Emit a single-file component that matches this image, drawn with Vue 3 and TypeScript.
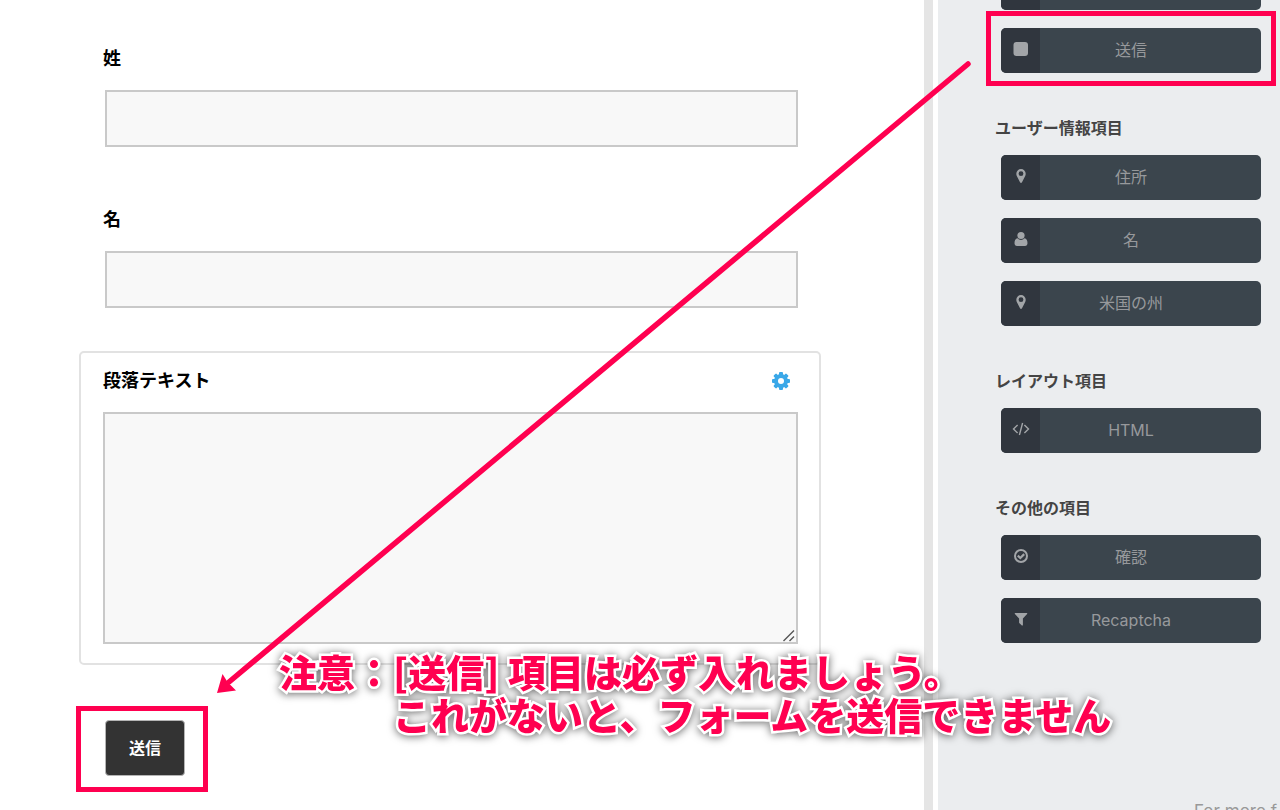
<script setup lang="ts">
type IconName = 'square' | 'marker' | 'user' | 'code' | 'check' | 'filter' | 'none'

interface FieldItem {
  label: string
  icon: IconName
  highlighted?: boolean
}

interface FieldGroup {
  title: string
  items: FieldItem[]
}

const groups: FieldGroup[] = [
  {
    title: '',
    items: [
      { label: '', icon: 'none' },
      { label: '送信', icon: 'square', highlighted: true },
    ],
  },
  {
    title: 'ユーザー情報項目',
    items: [
      { label: '住所', icon: 'marker' },
      { label: '名', icon: 'user' },
      { label: '米国の州', icon: 'marker' },
    ],
  },
  { title: 'レイアウト項目', items: [{ label: 'HTML', icon: 'code' }] },
  {
    title: 'その他の項目',
    items: [
      { label: '確認', icon: 'check' },
      { label: 'Recaptcha', icon: 'filter' },
    ],
  },
]
</script>

<template>
  <div class="page">
    <main class="canvas">
      <form class="form" @submit.prevent>
        <div class="field">
          <label class="label" for="last-name">姓</label>
          <input id="last-name" class="input" type="text" />
        </div>
        <div class="field">
          <label class="label" for="first-name">名</label>
          <input id="first-name" class="input" type="text" />
        </div>
        <div class="field card">
          <div class="card-head">
            <label class="label" for="paragraph">段落テキスト</label>
            <button class="gear" type="button" aria-label="設定">
              <svg viewBox="0 0 18 18" width="18" height="18">
                <g fill="#3aa8e8">
                  <rect v-for="n in 4" :key="n" x="7" y="0" width="4" height="18" rx="1" :transform="`rotate(${n * 45} 9 9)`" />
                  <circle cx="9" cy="9" r="7" />
                </g>
                <circle cx="9" cy="9" r="3" fill="#fff" />
              </svg>
            </button>
          </div>
          <div class="area">
            <textarea id="paragraph" class="textarea"></textarea>
            <svg class="grip" viewBox="0 0 14 14" width="14" height="14">
              <path d="M1.500 12 L12 1.500 M7.500 12 L12 7.500" fill="none" stroke="#555" stroke-width="1.400" />
            </svg>
          </div>
        </div>
        <div class="actions">
          <button class="submit" type="submit">送信</button>
          <span class="mark submit-mark"></span>
        </div>
      </form>
    </main>

    <aside class="sidebar">
      <section v-for="(group, g) in groups" :key="g" class="group">
        <h2 v-if="group.title" class="group-title">{{ group.title }}</h2>
        <ul class="items">
          <li v-for="(item, i) in group.items" :key="i" class="item">
            <button class="tile" type="button">
              <span class="tile-icon">
                <svg v-if="item.icon === 'square'" viewBox="0 0 16 16" width="16" height="16">
                  <rect x="0.500" y="1" width="14.500" height="14" rx="3" fill="currentColor" />
                </svg>
                <svg v-else-if="item.icon === 'marker'" viewBox="0 0 16 16" width="16" height="16">
                  <path
                    fill="currentColor"
                    fill-rule="evenodd"
                    d="M8 1 A4.700 4.700 0 0 1 12.700 5.700 C12.700 6.600 12.500 7.300 12.200 7.900 L9 14.300 Q8 15.700 7 14.300 L3.800 7.900 C3.500 7.300 3.300 6.600 3.300 5.700 A4.700 4.700 0 0 1 8 1 Z M8 3.300 A2.400 2.400 0 1 0 8 8.100 A2.400 2.400 0 1 0 8 3.300 Z"
                  />
                </svg>
                <svg v-else-if="item.icon === 'user'" viewBox="0 0 16 16" width="16" height="16">
                  <circle cx="8" cy="4.500" r="3.600" fill="currentColor" />
                  <path
                    fill="currentColor"
                    d="M4.600 7.300 C5.500 8.300 6.700 8.900 8 8.900 C9.300 8.900 10.500 8.300 11.400 7.300 C13.800 7.500 14.500 9.800 14.500 12.300 C14.500 13.900 13.500 15 12 15 H4 C2.500 15 1.500 13.900 1.500 12.300 C1.500 9.800 2.200 7.500 4.600 7.300 Z"
                  />
                </svg>
                <svg v-else-if="item.icon === 'code'" viewBox="0 0 18 16" width="18" height="16">
                  <path
                    d="M5.600 4 L1.500 8 L5.600 12 M12.400 4 L16.500 8 L12.400 12 M10.600 2 L7.400 14"
                    fill="none"
                    stroke="currentColor"
                    stroke-width="1.400"
                  />
                </svg>
                <svg v-else-if="item.icon === 'check'" viewBox="0 0 16 16" width="16" height="16">
                  <circle cx="8" cy="8" r="6" fill="none" stroke="currentColor" stroke-width="2" />
                  <path d="M4.800 7.600 L7.300 10 L11.200 6.100" fill="none" stroke="currentColor" stroke-width="2.200" />
                </svg>
                <svg v-else-if="item.icon === 'filter'" viewBox="0 0 16 16" width="16" height="16">
                  <path
                    fill="currentColor"
                    d="M2.300 2 H13.700 Q14.700 2.300 14.100 3.100 L9.900 7.500 V14 Q9.700 14.900 8.900 14.400 L6.500 12.200 Q6.100 11.900 6.100 11.400 V7.500 L1.900 3.100 Q1.300 2.300 2.300 2 Z"
                  />
                </svg>
              </span>
              <span class="tile-label">{{ item.label }}</span>
            </button>
            <span v-if="item.highlighted" class="mark tile-mark"></span>
          </li>
        </ul>
      </section>
      <p class="more">For more f</p>
    </aside>

    <svg class="arrow" viewBox="0 0 1280 810" aria-hidden="true">
      <path d="M968 64 L229 682" fill="none" stroke="#ff0050" stroke-width="5.500" stroke-linecap="round" />
      <path d="M217 693 L222.500 674 L227.500 682 L236 690.500 Z" fill="#ff0050" />
    </svg>
    <p class="callout">
      <span class="callout-line">注意：[送信] 項目は必ず入れましょう。</span>
      <span class="callout-line callout-indent">これがないと、フォームを送信できません</span>
    </p>
  </div>
</template>

<style>
body {
  margin: 0;
  overflow: hidden;
}
</style>

<style scoped>
.page {
  position: relative;
  display: grid;
  grid-template-columns: minmax(0, 1fr) 356px;
  height: 100vh;
  overflow: hidden;
  background: #fff;
  font-family: Inter, "Noto Sans CJK JP", sans-serif;
  color: #000;
}

button,
input,
textarea {
  font-family: inherit;
}

.form {
  padding: 47px 103px 0 79px;
}

.field {
  padding: 0 23px 0 24px;
  margin-bottom: 60px;
}

.label {
  display: block;
  font-size: 18px;
  line-height: 24px;
  font-weight: 700;
}

.input,
.textarea {
  display: block;
  box-sizing: border-box;
  width: 100%;
  margin: 0;
  padding: 8px;
  border: 2px solid #c9c9c9;
  border-radius: 0;
  background: #f8f8f8;
  font-size: 18px;
  outline: none;
}

.input {
  width: calc(100% - 2px);
  height: 57px;
  margin: 19px 0 0 2px;
}

.field:first-child {
  margin-bottom: 61px;
}

.card {
  margin-top: -17px;
  margin-bottom: 55px;
  padding: 16px 21px 19px 22px;
  border: 2px solid #e2e2e2;
  border-radius: 5px;
}

.card-head {
  display: flex;
  align-items: center;
  justify-content: space-between;
  margin-bottom: 19px;
}

.gear {
  display: flex;
  margin: 0 8px 0 0;
  padding: 0;
  border: 0;
  background: none;
}

.area {
  position: relative;
}

.textarea {
  height: 232px;
  resize: none;
}

.grip {
  position: absolute;
  right: 2px;
  bottom: 1px;
}

.actions {
  position: relative;
  width: 80px;
  margin-left: 26px;
}

.submit {
  display: block;
  box-sizing: border-box;
  width: 100%;
  height: 56px;
  padding: 0 0 2px;
  border: 1px solid #b5b5b5;
  border-radius: 4px;
  background: #333;
  color: #fff;
  font-size: 16px;
  font-weight: 700;
}

.mark {
  position: absolute;
  border: 5px solid #ff0050;
  pointer-events: none;
}

.submit-mark {
  inset: -14px -23px -16px -29px;
}

.tile-mark {
  inset: -17px -15px -13px -15px;
}

.sidebar {
  min-width: 0;
  box-sizing: border-box;
  overflow: hidden;
  padding: 0 19px 0 62px;
  border-left: 9px solid #e5e5e5;
  box-shadow: inset 5px 0 0 #fff;
  background: #ebedef;
}

.group:first-child {
  margin-top: -35px;
}

.group-title {
  margin: 43px 0 15px;
  font-size: 16px;
  line-height: 24px;
  font-weight: 700;
  color: #444;
}

.items {
  display: flex;
  flex-direction: column;
  gap: 18px;
  margin: 0;
  padding: 0 0 0 6px;
  list-style: none;
}

.item {
  position: relative;
}

.tile {
  display: grid;
  grid-template-columns: 39px 1fr 39px;
  align-items: center;
  width: 100%;
  height: 45px;
  padding: 0;
  overflow: hidden;
  border: 0;
  border-radius: 5px;
  background: #3b454d;
  color: #a2a5a8;
}

.tile-icon {
  display: flex;
  align-items: center;
  justify-content: center;
  box-sizing: border-box;
  height: 45px;
  padding-bottom: 3px;
  background: #30363e;
}

.tile-label {
  padding-bottom: 2px;
  font-size: 16px;
  line-height: 24px;
  color: #97999c;
}

.more {
  margin: 156px -19px 0 199px;
  white-space: nowrap;
  font-size: 17px;
  line-height: 24px;
  color: #999;
}

.arrow {
  position: absolute;
  top: 0;
  left: 0;
  width: 100%;
  pointer-events: none;
}

.callout {
  position: absolute;
  left: 279px;
  top: 649px;
  margin: 0;
  font-family: "Noto Sans CJK JP", sans-serif;
  font-size: 38px;
  line-height: 43px;
  font-weight: 900;
  white-space: nowrap;
  color: #ff0050;
  -webkit-text-stroke: 5px #fff;
  paint-order: stroke fill;
  filter: drop-shadow(0 1px 4px rgba(0, 0, 0, 0.6));
  pointer-events: none;
}

.callout-line {
  display: block;
}

.callout-indent {
  padding-left: 3em;
}
</style>
